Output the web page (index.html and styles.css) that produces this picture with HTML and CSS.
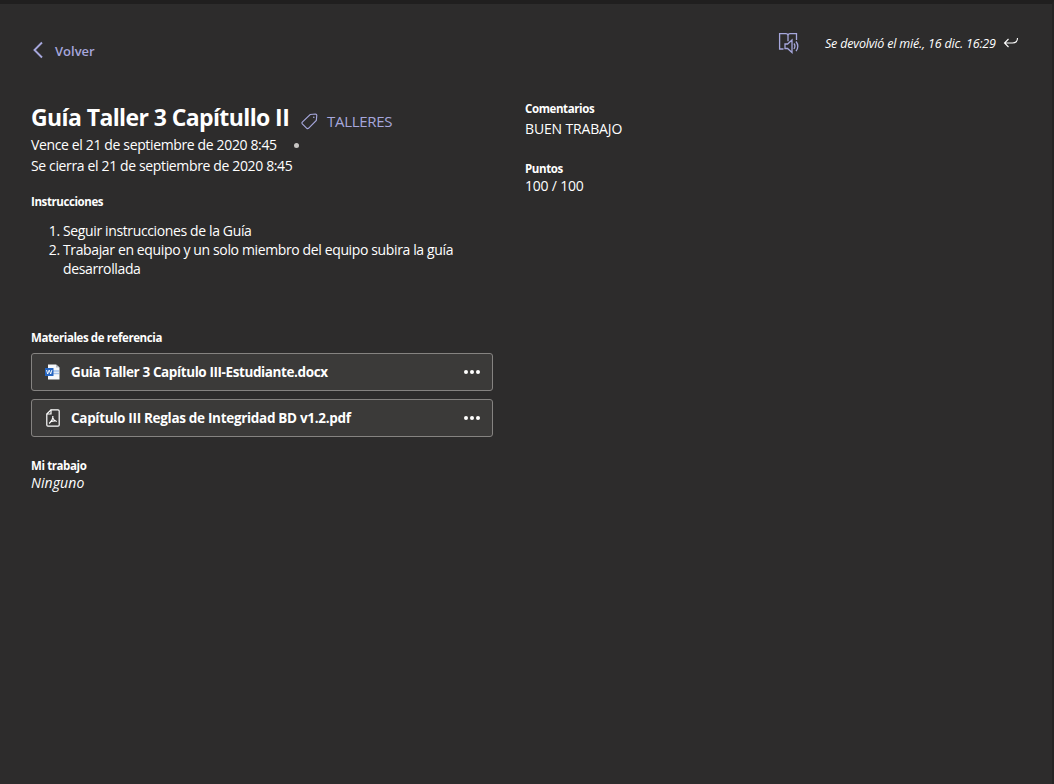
FILE: index.html
```html
<!DOCTYPE html>
<html lang="es">
<head>
<meta charset="utf-8">
<title>Guía Taller 3 Capítullo II</title>
<link rel="stylesheet" href="styles.css">
</head>
<body>
<main class="page">
  <header class="topbar">
    <a class="back">
      <svg width="12" height="18" viewBox="0 0 12 18"><path d="M10 1.500 2.500 9l7.500 7.500" fill="none" stroke="currentColor" stroke-width="1.900"/></svg>
      <span>Volver</span>
    </a>
    <div class="status">
      <svg class="reader" width="22" height="22" viewBox="0 0 22 22" fill="none" stroke="currentColor" stroke-width="1.300">
        <path d="M5.500 17H1.600V1.700h6.200q2.200 0 2.200 2v5.500M10 3.700q0-2 2.200-2h6.300v6.300"/>
        <path d="M7 12h2.600l4.400-4v12.500l-4.400-4H7zM16 11.500q1.800 2.500 0 5.500M18 9.500q3.600 4.700 0 9.700"/>
      </svg>
      <span class="returned">Se devolvió el mié., 16 dic. 16:29</span>
      <svg class="return-arrow" width="16" height="12" viewBox="0 0 16 12"><path d="M14.500 1q0 5-5 5H1.500M5.500 2 1.500 6l4 4" fill="none" stroke="currentColor" stroke-width="1.100"/></svg>
    </div>
  </header>
  <div class="columns">
    <section class="details">
      <div class="heading">
        <h1>Guía Taller 3 Capítullo II</h1>
        <svg class="tag" width="17" height="17" viewBox="0 0 17 17" fill="none" stroke="currentColor" stroke-width="1.150"><path d="M9.200 1.500 14.500 1q1.300 0 1.300 1.300l-.5 5.200-7.800 7.800q-.9.700-1.700 0L1.300 10.900q-.7-.9 0-1.700z"/><circle cx="12.800" cy="4.200" r=".8" fill="currentColor" stroke="none"/></svg>
        <span class="category">TALLERES</span>
      </div>
      <p class="due"><span class="due-text">Vence el 21 de septiembre de 2020 8:45</span><i class="dot"></i></p>
      <p class="closes">Se cierra el 21 de septiembre de 2020 8:45</p>
      <h2 class="label-instructions">Instrucciones</h2>
      <ol class="steps">
        <li>Seguir instrucciones de la Guía</li>
        <li>Trabajar en equipo y un solo miembro del equipo subira la guía<br>desarrollada</li>
      </ol>
      <h2 class="label-materials">Materiales de referencia</h2>
      <div class="files">
        <div class="file">
          <svg width="16" height="18" viewBox="0 0 16 18"><path d="M3 1.500h8l3.500 3V16.500H3z" fill="#f5f7fa"/><path d="M11 1.500v3h3.500z" fill="#b9bec5"/><path d="M8 8h6M8 10.500h6" stroke="#a3c2ec" stroke-width="1.500"/><path d="M0 5h8.500v8H0z" fill="#2565c0"/><path d="m1.500 7 1.200 4 1.500-4 1.500 4 1.200-4" fill="none" stroke="#fff" stroke-width=".9"/></svg>
          <span class="name docx">Guia Taller 3 Capítulo III-Estudiante.docx</span>
          <span class="more"><i></i><i></i><i></i></span>
        </div>
        <div class="file">
          <svg width="16" height="18" viewBox="0 0 16 18" fill="none" stroke="#fff" stroke-width="1.200"><path d="M6 .8h7q1.200 0 1.200 1.200v14q0 1.200-1.200 1.200H3Q1.800 17.200 1.800 16V5z"/><path d="M6 .8V5H1.800M7.800 7v1.800Q7.500 11.500 4.200 14.500M7.800 8.800q.7 2.500 4 3.700M5.700 12.700q2.500-1 5.300-.7"/></svg>
          <span class="name pdf">Capítulo III Reglas de Integridad BD v1.2.pdf</span>
          <span class="more"><i></i><i></i><i></i></span>
        </div>
      </div>
      <h2 class="label-work">Mi trabajo</h2>
      <p class="none">Ninguno</p>
    </section>
    <aside class="feedback">
      <h2 class="label-comments">Comentarios</h2>
      <p class="comment">BUEN TRABAJO</p>
      <h2 class="label-points">Puntos</h2>
      <p class="points">100 / 100</p>
    </aside>
  </div>
</main>
</body>
</html>
```
FILE: styles.css
```css
* { box-sizing: border-box; }
body { margin: 0; background: #2d2c2c; color: #fff; font: 14px/20px "Open Sans", "Noto Sans", sans-serif; }
h1, h2, p { margin: 0; white-space: nowrap; }
svg { display: block; flex: none; }
.page { height: 784px; border-top: 4px solid #201f1f; border-right: 2px solid #252424; padding: 0 34px 0 31px; overflow: hidden; }
.topbar { height: 94px; display: flex; justify-content: space-between; }
.back { display: flex; align-items: center; gap: 11px; height: 20px; margin: 36px 0 0 1px; color: #a6a7dc; font-weight: 600; font-size: 13px; }
.back span { padding-top: 2px; }
.status { display: flex; align-items: center; height: 22px; margin-top: 28px; }
.reader { color: #a6a7dc; }
.returned { width: 172px; margin: 2px 0 0 25px; font-size: 12.5px; font-style: italic; font-weight: 500; letter-spacing: -.18px; white-space: nowrap; }
.return-arrow { margin-left: 6px; margin-right: -1px; }
.columns { display: grid; grid-template-columns: 462px 1fr; column-gap: 32px; }
.heading { display: flex; height: 37px; align-items: center; white-space: nowrap; }
h1 { width: 259px; font-size: 23px; line-height: 32px; font-weight: 700; letter-spacing: -.6px; margin-top: 1px; }
.tag { margin: 9px 0 0 11px; color: #a6a7dc; }
.category { margin: 9px 0 0 9px; color: #a6a7dc; font-size: 15px; letter-spacing: -.3px; }
.due { display: flex; align-items: center; letter-spacing: -.36px; }
.due-text { width: 246px; }
.dot { width: 5px; height: 5px; border-radius: 50%; background: #c8c6c4; margin-left: 17px; }
.closes { margin-top: 1px; letter-spacing: -.36px; }
h2 { font-size: 11.5px; line-height: 16px; font-weight: 700; letter-spacing: -.4px; }
.label-instructions { margin-top: 18px; }
.steps { margin: 11px 0 0; padding-left: 32px; line-height: 19px; letter-spacing: -.37px; white-space: nowrap; }
.label-materials { margin-top: 52px; }
.files { display: grid; gap: 8px; margin-top: 7px; }
.file { display: flex; align-items: center; height: 38px; padding: 0 12px 0 13px; border: 1px solid #858381; border-radius: 3px; background: #3b3a39; }
.name { margin-left: 10px; font-size: 13.5px; font-weight: 700; white-space: nowrap; }
.docx { letter-spacing: -.4px; }
.pdf { letter-spacing: -.31px; }
.more { display: flex; gap: 2px; margin: 0 0 0 auto; }
.more i { width: 4px; height: 4px; border-radius: 50%; background: #fff; }
.label-work { margin-top: 21px; }
.none { font-style: italic; line-height: 18px; letter-spacing: .1px; }
.feedback { padding-top: 3px; }
.comment { margin-top: 2px; letter-spacing: -.15px; }
.label-points { margin-top: 22px; }
.points { line-height: 18px; letter-spacing: -.2px; }
```
